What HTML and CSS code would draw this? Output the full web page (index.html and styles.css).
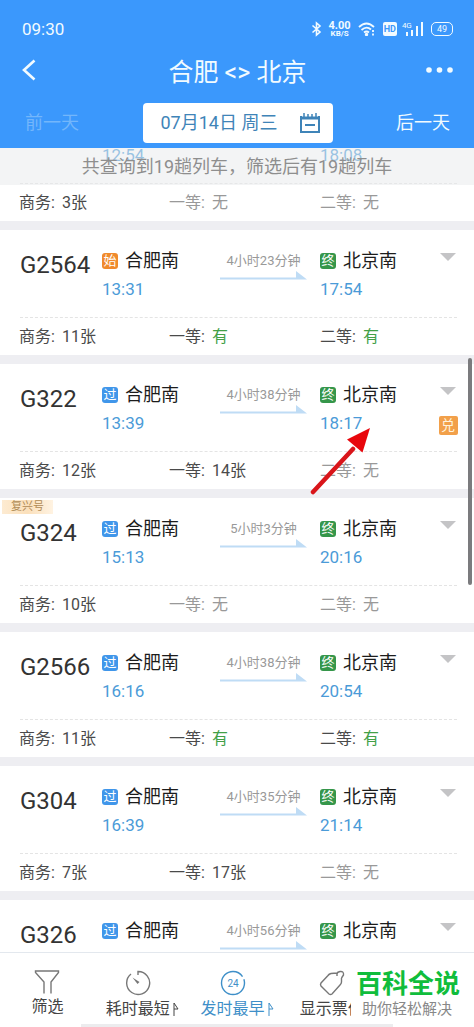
FILE: index.html
```html
<!DOCTYPE html>
<html lang="zh-CN">
<head>
<meta charset="utf-8">
<meta name="viewport" content="width=device-width, initial-scale=1">
<title>合肥 - 北京</title>
<link rel="stylesheet" href="styles.css">
</head>
<body>
<header class="header">
  <div class="status">
    <span class="clock">09:30</span>
    <div class="status-icons">
      <svg width="11" height="16" viewBox="0 0 11 16" fill="none" stroke="currentColor" stroke-width="1.600"><path d="M1.500 4.500 9 11 5.500 14V2L9 5 1.500 11.500"/></svg>
      <span class="speed"><b>4.00</b><small>KB/S</small></span>
      <svg width="18" height="14" viewBox="0 0 18 14" fill="none" stroke="currentColor" stroke-width="1.800"><path d="M1 5Q8.500-2 16 5M3.500 8Q8.500 3.500 13 7.500M6 10.500Q8.500 8.500 11 10.500"/><circle cx="8.500" cy="12.500" r=".8"/><path d="M15 8v2M15 11.500v2"/></svg>
      <span class="hd">HD</span>
      <span class="signal"><small>4G</small><svg width="20" height="14" viewBox="0 0 20 14" fill="currentColor"><path d="M2 10h2v4H2zM7 8h2v6H7zM12 4h2v10h-2zM17 0h2v14h-2z"/></svg></span>
      <span class="battery">49</span>
    </div>
  </div>
  <div class="titlebar">
    <button class="plain" aria-label="返回"><svg width="14" height="22" viewBox="0 0 14 22" fill="none" stroke="currentColor" stroke-width="2.600"><path d="M12.500 1.500 2 11l10.500 9.500"/></svg></button>
    <h1>合肥 &lt;&gt; 北京</h1>
    <button class="plain" aria-label="更多"><svg width="28" height="8" viewBox="0 0 28 8" fill="currentColor"><circle cx="4" cy="4" r="2.800"/><circle cx="14.500" cy="4" r="2.800"/><circle cx="25" cy="4" r="2.800"/></svg></button>
  </div>
  <div class="datebar">
    <button class="plain" disabled>前一天</button>
    <button class="date"><span>07月14日 周三</span><svg width="20" height="20" viewBox="0 0 20 20" fill="none" stroke="currentColor" stroke-width="2"><path d="M1 3v16h18V3M5 12h10"/><path d="M1 5h18" stroke-width="3"/><path d="M4 0v5M8 1v4M12 1v4M16 0v5" stroke-width="1.500"/></svg></button>
    <button class="plain">后一天</button>
  </div>
</header>
<main class="results">
  <p class="notice">共查询到19趟列车，筛选后有19趟列车</p>
  <div class="list" id="list"></div>
  <span class="thumb"></span>
  <svg class="pointer" width="62" height="70" viewBox="0 0 62 70"><path d="M3 67 43 24" stroke="#d9151a" stroke-width="4.500" stroke-linecap="round"/><path d="M60 3 37 14.500 52.500 27.500Z" fill="#e8060c"/></svg>
</main>
<nav class="tabs">
  <button class="tab"><svg width="26" height="24" viewBox="0 0 26 24" fill="none" stroke="currentColor" stroke-width="1.400"><path d="M10 23.500V12L1.500 2.500V1h23v1.500L17 12v11.500"/></svg><span>筛选</span></button>
  <button class="tab sorted"><svg width="26" height="26" viewBox="0 0 26 26" fill="none" stroke="currentColor" stroke-width="1.400"><path d="M13 5V1.500a11.500 11.500 0 1 1-7 2.500"/><path d="m7.500 7.500 7 4.500-2 2z" fill="currentColor" stroke="none"/></svg><span>耗时最短<svg width="7" height="14" viewBox="0 0 7 14" fill="none" stroke="currentColor"><path d="M2 14V1l4 6H2" /></svg></span></button>
  <button class="tab sorted active"><svg width="26" height="26" viewBox="0 0 26 26" fill="none" stroke="currentColor" stroke-width="1.400"><circle cx="13" cy="13" r="11.500" stroke-dasharray="65 3"/><text x="13" y="17" text-anchor="middle" font-size="10" fill="currentColor" stroke="none">24</text></svg><span>发时最早<svg width="7" height="14" viewBox="0 0 7 14" fill="none" stroke="currentColor"><path d="M2 14V1l4 6H2" /></svg></span></button>
  <button class="tab"><svg width="26" height="26" viewBox="0 0 26 26" fill="none" stroke="currentColor" stroke-width="1.400"><path d="M18 6V4q0-2 3-2.500 4-.5 3.500 3.500l-2 3M18 3l-6 .5Q10 4 9 5.500L2 13q-1 1.500 0 3l8 8q1.500 1 3 0l8-9q1.500-1.500 1.500-3V8"/></svg><span>显示票价</span></button>
  <div class="brand"><strong>百科全说</strong><span>助你轻松解决</span></div>
</nav>
<script src="app.js"></script>
</body>
</html>
```

FILE: app.js
```js
const trains = [
  { no: "G272", mark: "过", dep: "12:54", arr: "18:08", dur: "5小时14分钟", seats: ["3张", "无", "无"] },
  { no: "G2564", mark: "始", dep: "13:31", arr: "17:54", dur: "4小时23分钟", seats: ["11张", "有", "有"] },
  { no: "G322", mark: "过", dep: "13:39", arr: "18:17", dur: "4小时38分钟", seats: ["12张", "14张", "无"], exchange: true },
  { no: "G324", mark: "过", dep: "15:13", arr: "20:16", dur: "5小时3分钟", seats: ["10张", "无", "无"], tag: "复兴号" },
  { no: "G2566", mark: "过", dep: "16:16", arr: "20:54", dur: "4小时38分钟", seats: ["11张", "有", "有"] },
  { no: "G304", mark: "过", dep: "16:39", arr: "21:14", dur: "4小时35分钟", seats: ["7张", "17张", "无"] },
  { no: "G326", mark: "过", dep: "16:49", arr: "21:45", dur: "4小时56分钟", seats: ["9张", "有", "有"] }
];
const classes = ["商务", "一等", "二等"];
const markStyle = { "始": "orange", "过": "blue", "终": "green" };

const stop = (mark, name, time) => `
  <div class="stop">
    <div class="station"><i class="mark ${markStyle[mark]}">${mark}</i>${name}</div>
    <time>${time}</time>
  </div>`;

const seat = (value, i) => {
  const state = value === "无" ? "none" : value === "有" ? "some" : "";
  return `<span class="seat ${state}">${classes[i]}:<b>${value}</b></span>`;
};

document.getElementById("list").innerHTML = trains.map(t => `
  <article class="card">
    ${t.tag ? `<span class="tag">${t.tag}</span>` : ""}
    <div class="trip">
      <h2>${t.no}</h2>
      ${stop(t.mark, "合肥南", t.dep)}
      <div class="duration"><span>${t.dur}</span>
        <svg width="87" height="9" viewBox="0 0 87 9" fill="#bfdcf5"><path d="M0 6.500h76V0l11 8.500H0z"/></svg>
      </div>
      ${stop("终", "北京南", t.arr)}
      <div class="side">
        <button class="more" aria-label="展开"></button>
        ${t.exchange ? '<span class="exchange">兑</span>' : ""}
      </div>
    </div>
    <div class="seats">${t.seats.map(seat).join("")}</div>
  </article>`).join("");
```

FILE: styles.css
```css
* { box-sizing: border-box; }

body {
  margin: 0;
  height: 100vh;
  display: flex;
  flex-direction: column;
  background: #fff;
  color: #333;
  font-family: Roboto, "Noto Sans CJK SC", sans-serif;
}

button {
  margin: 0;
  padding: 0;
  border: 0;
  background: none;
  color: inherit;
  font: inherit;
}

svg { display: block; }

.header {
  background: #3b98fc;
  color: #f2fbff;
  padding: 16px 21px 5px 22px;
}

.status {
  display: flex;
  justify-content: space-between;
  align-items: center;
  height: 26px;
}

.clock { font-size: 17px; }

.status-icons {
  display: flex;
  align-items: center;
  gap: 7px;
}

.speed {
  display: flex;
  flex-direction: column;
  align-items: center;
  line-height: 9px;
}
.speed b { font-size: 11px; }
.speed small { font-size: 8px; line-height: 8px; font-weight: 700; }

.hd {
  background: #f2fbff;
  color: #3b98fc;
  border-radius: 2px;
  padding: 0 1px;
  font-size: 9px;
  line-height: 14px;
  font-weight: 700;
}

.signal { position: relative; }
.signal small {
  position: absolute;
  left: -2px;
  top: 0;
  font-size: 8px;
  line-height: 7px;
}

.battery {
  border: 1px solid #f2fbff;
  border-radius: 5px;
  padding: 0 5px;
  font-size: 9px;
  line-height: 12px;
}

.titlebar {
  display: grid;
  grid-template-columns: 1fr auto 1fr;
  align-items: center;
  height: 56px;
}
.titlebar .plain:last-child { justify-self: end; }

h1 {
  margin: 0;
  font-size: 25px;
  font-weight: 400;
}

.datebar {
  display: flex;
  justify-content: space-between;
  align-items: center;
  height: 45px;
  padding: 4px 3px 0;
  font-size: 18px;
  line-height: 20px;
}
.datebar .plain:disabled { color: #73b6fb; }

.date {
  display: flex;
  justify-content: space-between;
  align-items: center;
  flex: 0 0 190px;
  height: 40px;
  padding: 0 13px 0 18px;
  border-radius: 4px;
  background: #fff;
  color: #3f84b8;
}

.results {
  position: relative;
  flex: 1;
  min-height: 0;
  overflow: hidden;
}

.notice {
  position: absolute;
  inset: 0 0 auto;
  z-index: 1;
  margin: 0;
  height: 37px;
  background: rgba(232, 233, 236, .5);
  color: #8e8e8e;
  font-size: 18px;
  line-height: 38px;
  text-align: center;
}

/* The list is scrolled so that the first card sits partly under the header. */
.list { margin-top: -52px; }

.card {
  position: relative;
  height: 134px;
  border-bottom: 9px solid #eeeef2;
}

.trip {
  display: grid;
  grid-template-columns: 82fr 118fr 100fr 119fr 18px;
  height: 88px;
  margin: 0 17px 0 20px;
  padding-top: 19px;
  border-bottom: 1px dashed #e4e4e4;
}

h2 {
  margin: 3px 0 0;
  font-size: 24px;
  line-height: 26px;
  font-weight: 400;
}

.station {
  display: flex;
  align-items: center;
  gap: 7px;
  color: #1c1c1c;
  font-size: 18px;
  line-height: 24px;
}

.mark {
  width: 16px;
  height: 16px;
  border-radius: 3px;
  color: #fff;
  font-size: 13px;
  font-style: normal;
  line-height: 16px;
  text-align: center;
}
.orange { background: #f08a2c; }
.blue { background: #4096ea; }
.green { background: #35964a; }

time {
  display: block;
  margin-top: 4px;
  color: #4b9bd8;
  font-size: 17px;
  line-height: 24px;
}

.duration {
  display: flex;
  flex-direction: column;
  align-items: center;
  width: 87px;
  padding-top: 2px;
  color: #999;
  font-size: 13px;
  line-height: 20px;
}

.side {
  display: flex;
  flex-direction: column;
  align-items: center;
  gap: 21px;
  padding-top: 4px;
}

.more {
  width: 16px;
  height: 8px;
  background: #c4c4c6;
  clip-path: polygon(0 0, 100% 0, 50% 100%);
}

.exchange {
  width: 19px;
  height: 19px;
  border-radius: 2px;
  background: #f2a04a;
  color: #fff3dc;
  font-size: 14px;
  line-height: 18px;
  text-align: center;
}

.seats {
  display: grid;
  grid-template-columns: 150fr 151fr 137fr;
  margin: 0 17px 0 19px;
  color: #4a4a4a;
  font-size: 16px;
  line-height: 38px;
}
.seat b { margin-left: 7px; font-weight: 400; }
.seat.none { color: #999; }
.seat.some b { color: #43a047; }

.tag {
  position: absolute;
  left: 2px;
  top: 2px;
  padding: 0 9px;
  background: linear-gradient(90deg, #fdebd2, #fbe0bb, #fff3e2);
  color: #b08b55;
  font-size: 11px;
  line-height: 14px;
}

.thumb {
  position: absolute;
  right: 2px;
  top: 210px;
  width: 4px;
  height: 227px;
  border-radius: 2px;
  background: #7b7b7e;
}

.pointer {
  position: absolute;
  left: 310px;
  top: 277px;
}

.tabs {
  position: relative;
  display: grid;
  grid-template-columns: repeat(5, 1fr);
  height: 75px;
  border-top: 1px solid #e3e8ee;
  background: linear-gradient(90deg, #fff 17%, #ececee 17%, #ececee 83%, #fff 83%) bottom / 100% 3px no-repeat #fff;
  color: #444;
}

.tab {
  display: flex;
  flex-direction: column;
  align-items: center;
  padding-top: 17px;
  font-size: 16px;
  line-height: 26px;
  white-space: nowrap;
}
.tab > svg { color: #777; }
.tab > span { display: flex; align-items: center; gap: 2px; }
.tab.sorted > svg { margin-right: 8px; }
.tab.active, .tab.active > svg { color: #3e8fc8; }

.brand {
  position: absolute;
  right: 0;
  top: 13px;
  bottom: 3px;
  width: 123px;
  padding: 3px 5px 0;
  background: #fff;
  color: #888;
  font-size: 15px;
  line-height: 20px;
}
.brand strong {
  display: block;
  color: #10bd3c;
  font-size: 26px;
  font-weight: 700;
  line-height: 30px;
}
.brand span { padding-left: 6px; }
```
